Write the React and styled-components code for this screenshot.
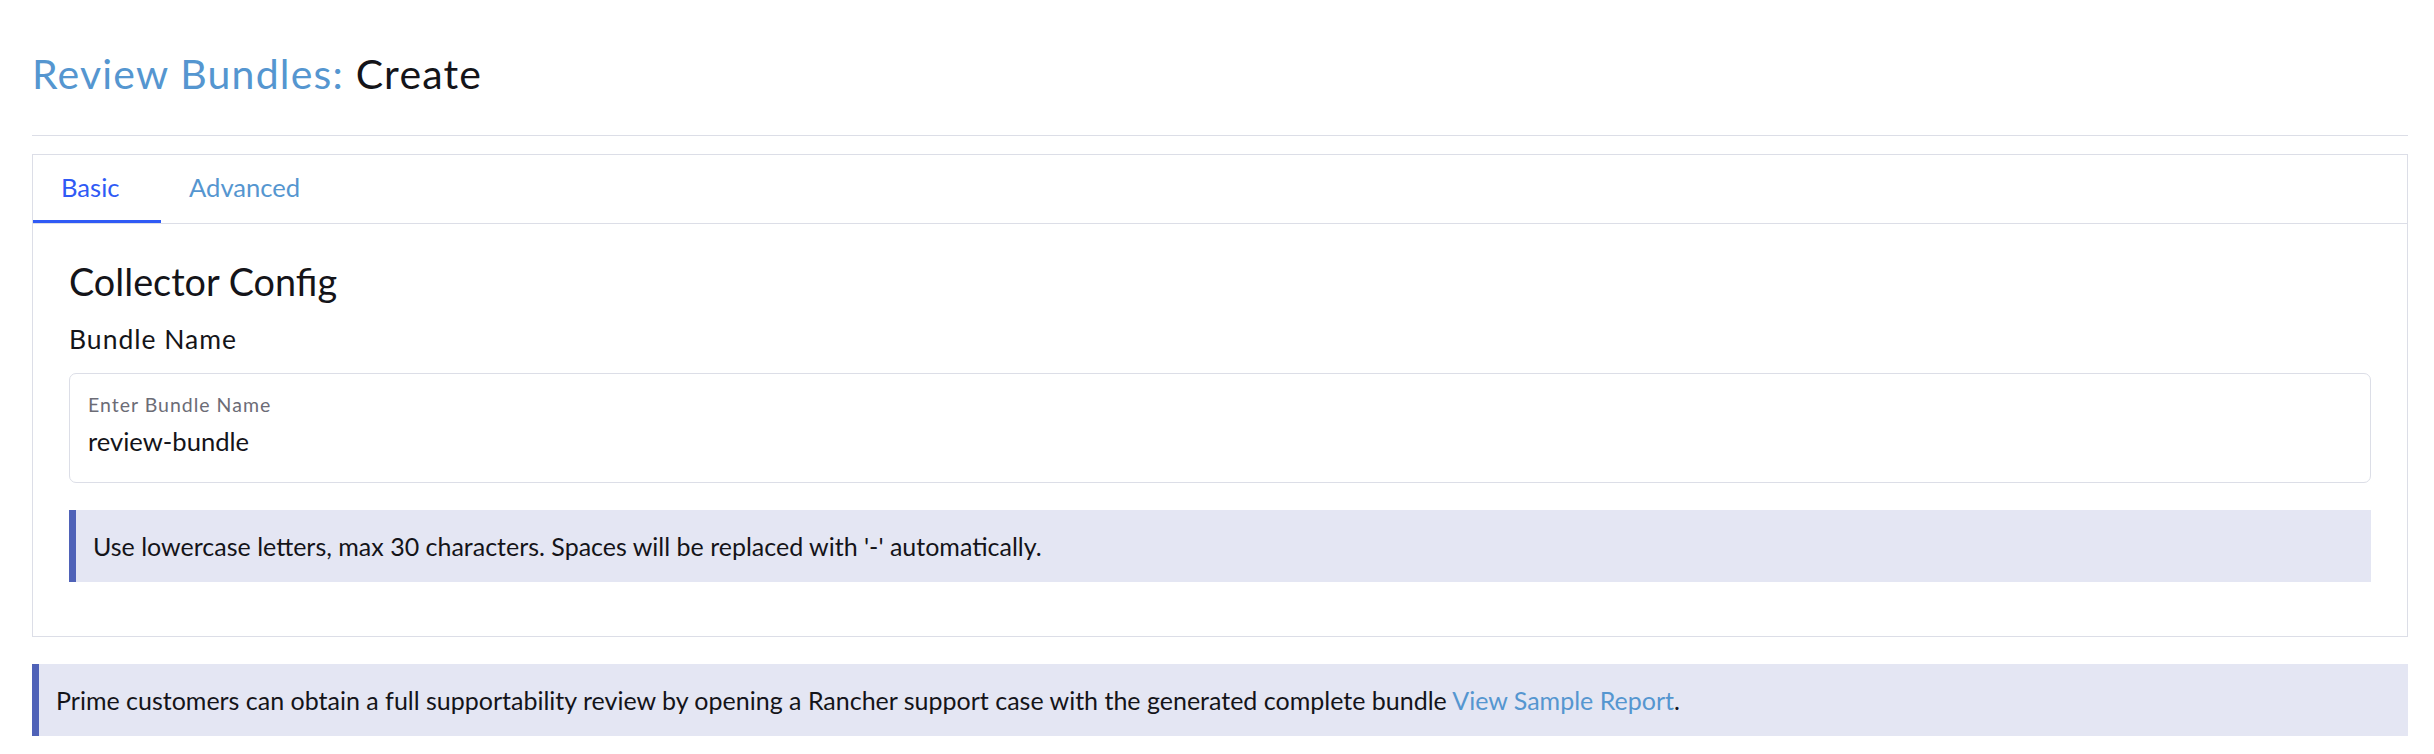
import React from "react";
import styled, { createGlobalStyle } from "styled-components";

const Global = createGlobalStyle`
  html, body { margin: 0; padding: 0; background: #ffffff; }
  body { font-family: Lato, "Open Sans", "Liberation Sans", sans-serif; color: #141419; }
  * { box-sizing: border-box; }
`;

const Page = styled.div`
  padding: 0 26px 0 32px;
`;

const Header = styled.header`
  padding-top: 50px;
  padding-bottom: 37px;
  border-bottom: 1px solid #dcdee7;
`;

const Title = styled.h1`
  margin: 0;
  font-size: 41px;
  line-height: 48px;
  letter-spacing: 1.2px;
  font-weight: 400;
  color: #141419;
`;

const Crumb = styled.span`
  color: #5596d0;
`;

const Card = styled.section`
  margin-top: 18px;
  border: 1px solid #dcdee7;
`;

const TabBar = styled.nav`
  display: flex;
  border-bottom: 1px solid #dcdee7;
`;

const Tab = styled.button`
  appearance: none;
  background: none;
  border: none;
  border-bottom: 3px solid ${(p) => (p.$active ? "#2f5af5" : "transparent")};
  height: 68px;
  min-width: ${(p) => (p.$active ? "128px" : "0")};
  padding: 0 28px;
  text-align: left;
  font-family: inherit;
  font-size: 25.6px;
  line-height: 65px;
  color: ${(p) => (p.$active ? "#2f5af5" : "#5596d0")};
  cursor: pointer;
`;

const Body = styled.div`
  padding: 36px 36px 54px 36px;
  display: flex;
  flex-direction: column;
`;

const SectionTitle = styled.h3`
  margin: 0;
  font-size: 37.8px;
  line-height: 44px;
  font-weight: 400;
`;

const FieldTitle = styled.h4`
  margin: 19px 0 0 0;
  font-size: 26.5px;
  line-height: 32px;
  letter-spacing: 1px;
  font-weight: 400;
`;

const InputBox = styled.label`
  margin-top: 18px;
  height: 110px;
  border: 1px solid #dcdee7;
  border-radius: 7px;
  padding: 20px 18px 0 18px;
  display: flex;
  flex-direction: column;
  gap: 9px;
`;

const InputLabel = styled.span`
  font-size: 19.5px;
  line-height: 22px;
  letter-spacing: 1px;
  color: #6c6c76;
`;

const Input = styled.input`
  border: none;
  outline: none;
  padding: 0;
  margin: 0;
  background: transparent;
  font-family: inherit;
  font-size: 25.6px;
  line-height: 32px;
  height: 32px;
  color: #141419;
`;

const Banner = styled.div`
  margin-top: ${(p) => p.$mt || "0px"};
  background: #e4e6f3;
  border-left: 7px solid #4f62b8;
  padding: 20px 17px;
  font-size: 25px;
  line-height: 32px;
  color: #141419;
`;

const Link = styled.a`
  color: #5596d0;
  text-decoration: none;
`;

export default function App() {
  return (
    <>
      <Global />
      <Page>
        <Header>
          <Title>
            <Crumb>Review Bundles:</Crumb> Create
          </Title>
        </Header>
        <Card>
          <TabBar>
            <Tab $active>Basic</Tab>
            <Tab>Advanced</Tab>
          </TabBar>
          <Body>
            <SectionTitle>Collector Config</SectionTitle>
            <FieldTitle>Bundle Name</FieldTitle>
            <InputBox>
              <InputLabel>Enter Bundle Name</InputLabel>
              <Input defaultValue="review-bundle" />
            </InputBox>
            <Banner $mt="27px">
              Use lowercase letters, max 30 characters. Spaces will be replaced with '-' automatically.
            </Banner>
          </Body>
        </Card>
        <Banner $mt="27px">
          Prime customers can obtain a full supportability review by opening a Rancher support case with the generated complete bundle{" "}
          <Link href="#">View Sample Report</Link>.
        </Banner>
      </Page>
    </>
  );
}
